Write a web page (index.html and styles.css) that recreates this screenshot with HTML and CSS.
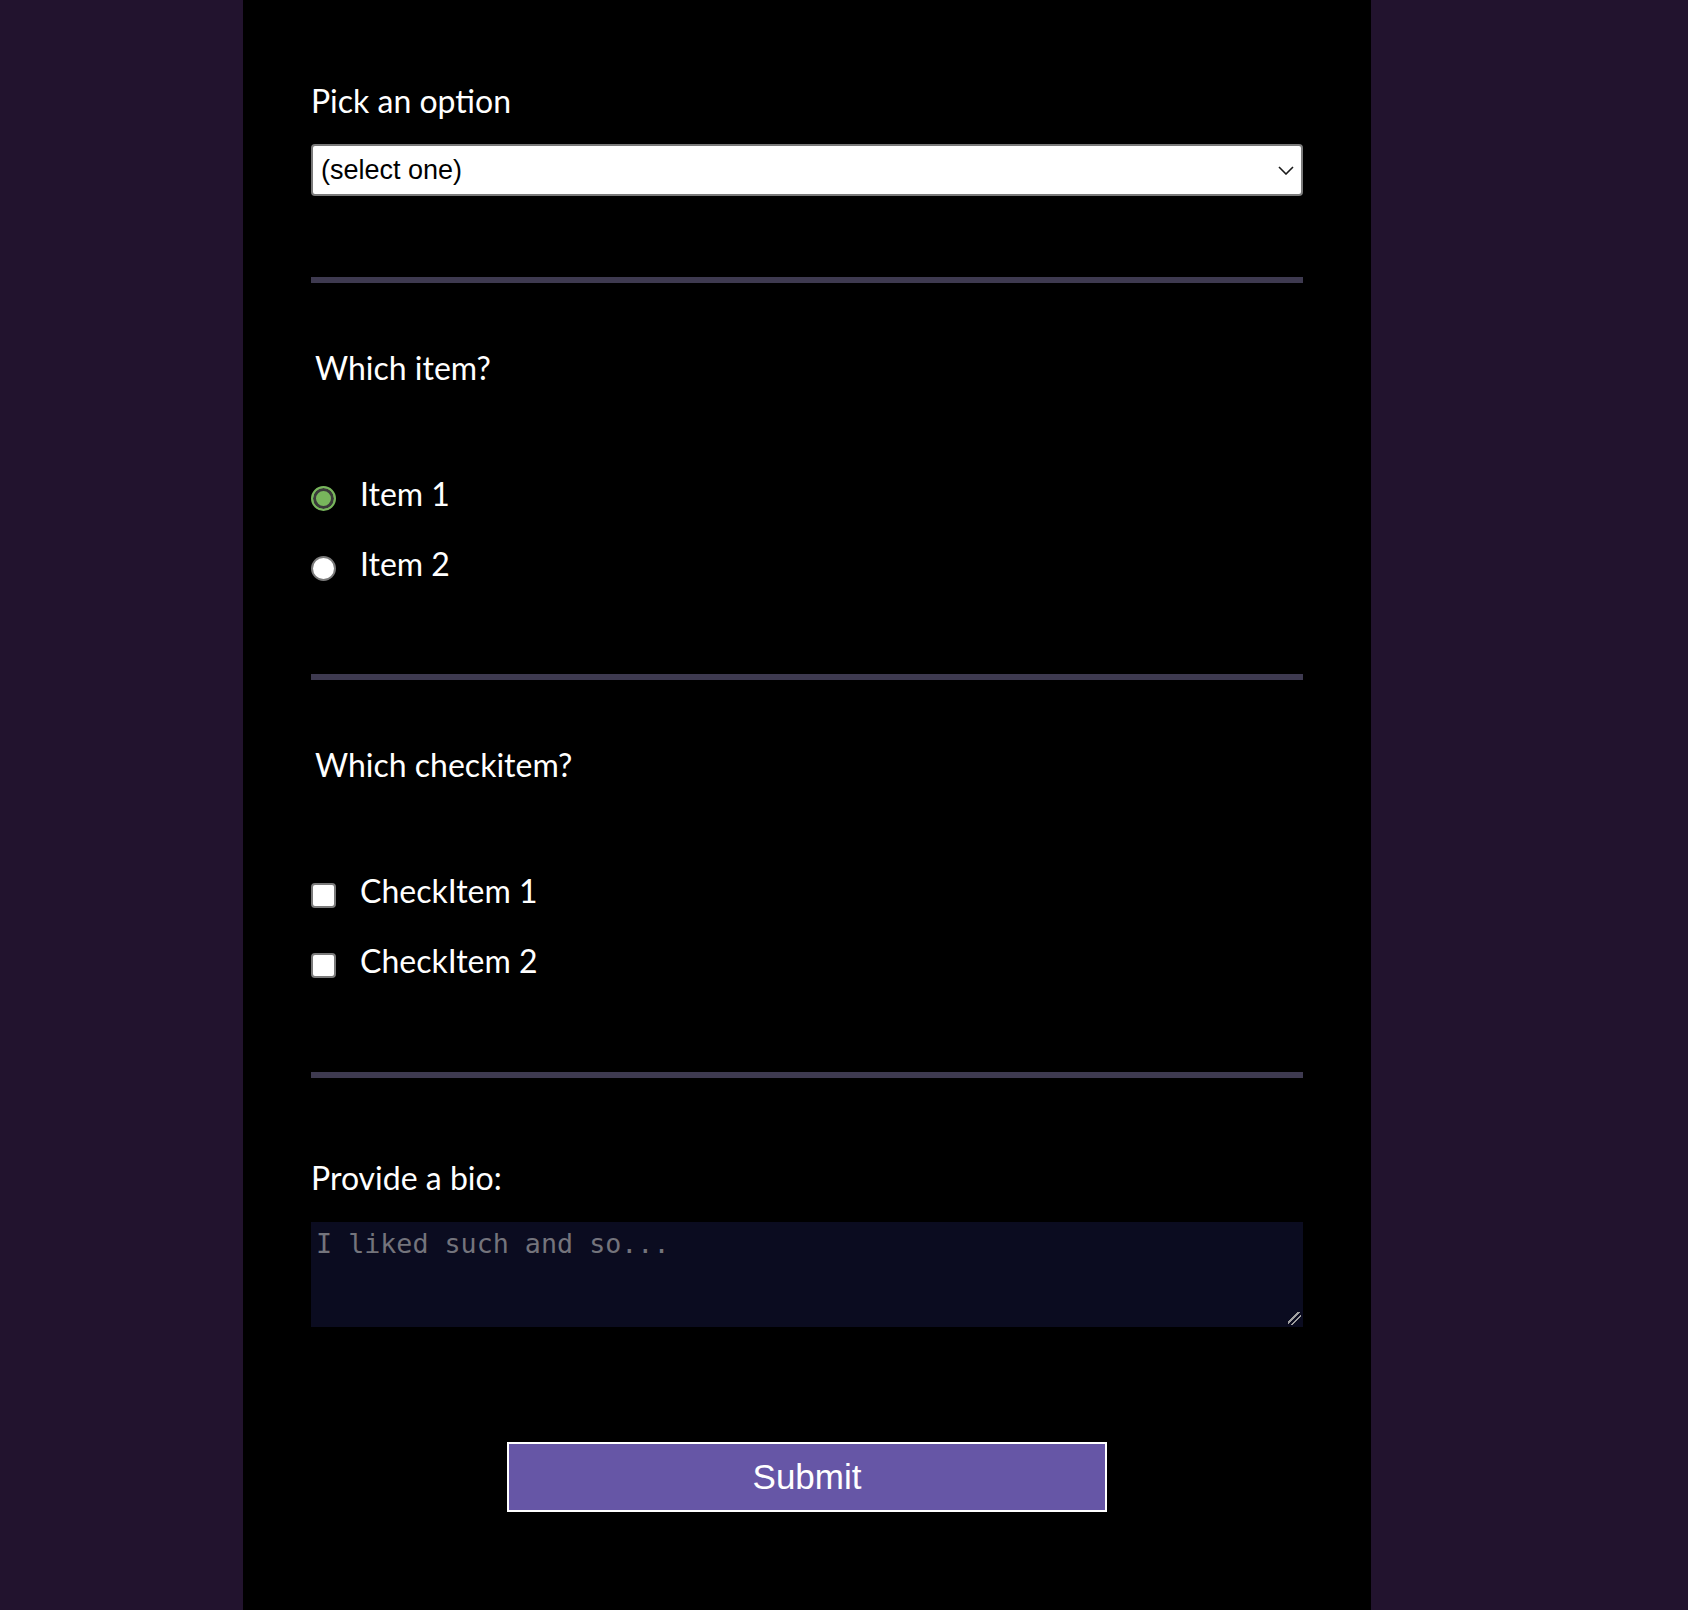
FILE: index.html
```html
<!DOCTYPE html>
<html lang="en">
<head>
<meta charset="utf-8">
<title>Form</title>
<link rel="stylesheet" href="styles.css">
</head>
<body>
<main class="page">
  <form class="form">
    <section class="group">
      <label class="label" for="option">Pick an option</label>
      <div class="select-wrap">
        <select id="option" class="select">
          <option>(select one)</option>
          <option>Option A</option>
          <option>Option B</option>
        </select>
        <svg class="chevron" width="16" height="9" viewBox="0 0 16 9" aria-hidden="true"><polyline points="1,1 8,8 15,1" fill="none" stroke="#1a1a1a" stroke-width="1.6"/></svg>
      </div>
    </section>

    <hr class="divider divider-first">

    <fieldset class="choice">
      <legend class="legend">Which item?</legend>
      <div class="options">
        <label class="option"><input type="radio" name="item" class="radio" checked><span>Item 1</span></label>
        <label class="option"><input type="radio" name="item" class="radio"><span>Item 2</span></label>
      </div>
    </fieldset>

    <hr class="divider">

    <fieldset class="choice">
      <legend class="legend">Which checkitem?</legend>
      <div class="options">
        <label class="option"><input type="checkbox" class="check"><span>CheckItem 1</span></label>
        <label class="option"><input type="checkbox" class="check"><span>CheckItem 2</span></label>
      </div>
    </fieldset>

    <hr class="divider divider-last">

    <section class="group group-bio">
      <label class="label" for="bio">Provide a bio:</label>
      <textarea id="bio" class="bio" placeholder="I liked such and so..."></textarea>
    </section>

    <div class="actions">
      <button type="submit" class="submit">Submit</button>
    </div>
  </form>
</main>
</body>
</html>
```

FILE: styles.css
```css
html, body {
  margin: 0;
  padding: 0;
}

body {
  background: #22132e;
  font-family: "Lato", "Open Sans", sans-serif;
  font-weight: 400;
  color: #ffffff;
}

.page {
  box-sizing: border-box;
  margin-left: 243px;
  width: 1128px;
  min-height: 100vh;
  background: #000000;
  padding: 82px 68px 0;
}

.form {
  display: flex;
  flex-direction: column;
}

.group {
  display: flex;
  flex-direction: column;
}

.label {
  display: block;
  font-size: 32px;
  line-height: 38px;
  height: 38px;
}

.select-wrap {
  position: relative;
  margin-top: 24px;
}

.select {
  box-sizing: border-box;
  display: block;
  width: 100%;
  height: 52px;
  margin: 0;
  padding: 0 40px 0 8px;
  -webkit-appearance: none;
  appearance: none;
  background: #ffffff;
  border: 2px solid #7a7a7a;
  border-radius: 4px;
  font-family: "Liberation Sans", Arial, sans-serif;
  font-weight: 400;
  font-size: 27px;
  color: #000000;
}

.chevron {
  position: absolute;
  right: 9px;
  top: 22px;
  pointer-events: none;
}

.divider {
  margin: 91px 0 0;
  height: 6px;
  border: 0;
  background: #3e3a50;
}

.divider-first {
  margin-top: 81px;
}

.divider-last {
  margin-top: 92px;
}

.choice {
  margin: 66px 0 0;
  padding: 0;
  border: 0;
  min-width: 0;
}

.legend {
  padding: 0 0 0 4px;
  font-size: 32px;
  line-height: 38px;
  height: 38px;
}

.options {
  margin-top: 88px;
  display: flex;
  flex-direction: column;
  gap: 32px;
}

.option {
  display: flex;
  align-items: center;
  height: 38px;
  font-size: 32px;
  line-height: 38px;
}

.option span {
  margin-left: 24px;
}

.radio,
.check {
  -webkit-appearance: none;
  appearance: none;
  box-sizing: border-box;
  flex: none;
  width: 25px;
  height: 25px;
  margin: 8px 0 0;
  background: #ffffff;
  border: 2px solid #7a7a7a;
}

.radio {
  border-radius: 50%;
}

.radio:checked {
  background: #78b65c;
  border-color: #78b65c;
  box-shadow: inset 0 0 0 3px #3a3a3a;
}

.check {
  border-radius: 4px;
}

.group-bio {
  margin-top: 81px;
}

.bio {
  box-sizing: border-box;
  display: block;
  width: 100%;
  height: 105px;
  margin-top: 25px;
  padding: 6px 5px;
  background: #0b0c20;
  border: 0;
  border-radius: 0;
  color: #d0d0d0;
  font-family: "DejaVu Sans Mono", monospace;
  font-weight: 400;
  font-size: 26.7px;
}

.bio::placeholder {
  color: #74747c;
}

.bio::-webkit-resizer {
  background:
    linear-gradient(135deg, transparent 0 33%, #a0a0a0 33% 41%, transparent 41% 100%),
    linear-gradient(135deg, transparent 0 54%, #a0a0a0 54% 62%, transparent 62% 100%) right 2px bottom 2px / 11px 11px no-repeat;
}

.actions {
  display: flex;
  justify-content: center;
  margin-top: 115px;
}

.submit {
  box-sizing: border-box;
  width: 600px;
  height: 70px;
  margin: 0;
  padding: 0;
  background: #6656a6;
  border: 2px solid #ffffff;
  border-radius: 0;
  color: #ffffff;
  font-family: "Liberation Sans", Arial, sans-serif;
  font-weight: 400;
  font-size: 35px;
}
```
